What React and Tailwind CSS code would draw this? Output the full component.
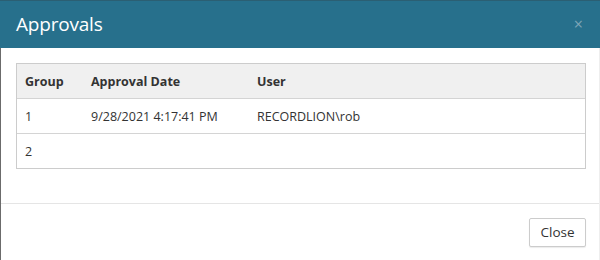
import React from "react";

export default function App() {
  const font = { fontFamily: '"Open Sans", "Noto Sans", sans-serif' };
  return (
    <div className="w-[600px] h-[260px] bg-white overflow-hidden flex flex-col" style={font}>
      <div className="h-[48px] shrink-0 bg-[#27708c] border-t border-[#2b5f73] flex items-center justify-between pl-4 pr-[17px]">
        <span className="text-white text-[19px] leading-none tracking-[-0.2px]">Approvals</span>
        <span className="text-[#7fa6b7] text-[16px] leading-none mb-[1px]">×</span>
      </div>
      <div className="flex-1 flex flex-col border-l border-[#6b6b6b] border-r-[#eeeeee] border-r">
        <div className="pt-[15px] pl-[15px] pr-[13px] pb-[34px] border-b border-[#e5e5e5]">
          <div className="border border-[#cccccc] text-[12.5px] text-[#333333]">
            <div className="flex h-[35px] items-center pt-[3px] bg-[#f0f0f0] border-b border-[#d4d4d4] font-bold">
              <div className="w-[66px] pl-[8px]">Group</div>
              <div className="w-[166px] pl-[8px]">Approval Date</div>
              <div className="flex-1 pl-[8px]">User</div>
            </div>
            <div className="flex h-[35px] items-center pt-[2px] border-b border-[#d4d4d4]">
              <div className="w-[66px] pl-[8px]">1</div>
              <div className="w-[166px] pl-[8px]">9/28/2021 4:17:41 PM</div>
              <div className="flex-1 pl-[8px]">RECORDLION\rob</div>
            </div>
            <div className="flex h-[34px] items-center pt-[2px]">
              <div className="w-[66px] pl-[8px]">2</div>
              <div className="w-[166px] pl-[8px]"></div>
              <div className="flex-1 pl-[8px]"></div>
            </div>
          </div>
        </div>
        <div className="flex justify-end pt-[14px] pr-[13px]">
          <button className="h-[29px] w-[57px] border border-[#cccccc] rounded-[2px] bg-white text-[13.5px] text-[#333333] shadow-[0_1px_1px_rgba(0,0,0,0.08)]">
            Close
          </button>
        </div>
      </div>
    </div>
  );
}
